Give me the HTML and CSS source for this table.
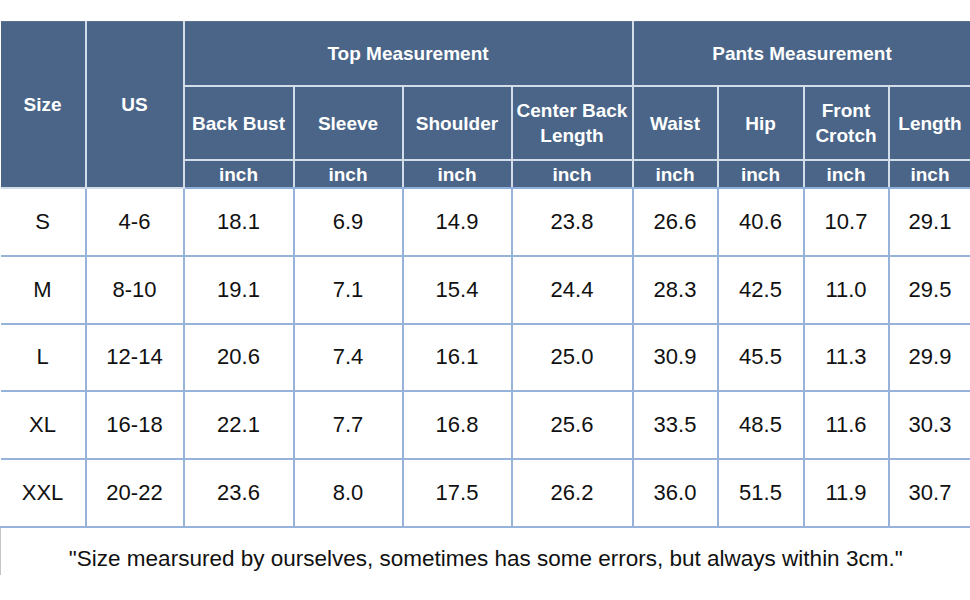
FILE: index.html
```html
<!DOCTYPE html>
<html>
<head>
<meta charset="utf-8">
<link rel="stylesheet" href="styles.css">
</head>
<body>
<table class="chart">
  <colgroup>
    <col style="width:85px"><col style="width:98px"><col style="width:110px"><col style="width:109px"><col style="width:109px"><col style="width:121px"><col style="width:85px"><col style="width:86px"><col style="width:85px"><col style="width:82px">
  </colgroup>
  <thead>
    <tr class="h1">
      <th rowspan="3" class="first">Size</th>
      <th rowspan="3">US</th>
      <th colspan="4">Top Measurement</th>
      <th colspan="4" class="last">Pants Measurement</th>
    </tr>
    <tr class="h2">
      <th>Back Bust</th>
      <th>Sleeve</th>
      <th>Shoulder</th>
      <th>Center Back<br>Length</th>
      <th>Waist</th>
      <th>Hip</th>
      <th>Front<br>Crotch</th>
      <th class="last">Length</th>
    </tr>
    <tr class="h3">
      <th>inch</th><th>inch</th><th>inch</th><th>inch</th><th>inch</th><th>inch</th><th>inch</th><th class="last">inch</th>
    </tr>
  </thead>
  <tbody>
    <tr><td class="first">S</td><td>4-6</td><td>18.1</td><td>6.9</td><td>14.9</td><td>23.8</td><td>26.6</td><td>40.6</td><td>10.7</td><td class="last">29.1</td></tr>
    <tr><td class="first">M</td><td>8-10</td><td>19.1</td><td>7.1</td><td>15.4</td><td>24.4</td><td>28.3</td><td>42.5</td><td>11.0</td><td class="last">29.5</td></tr>
    <tr><td class="first">L</td><td>12-14</td><td>20.6</td><td>7.4</td><td>16.1</td><td>25.0</td><td>30.9</td><td>45.5</td><td>11.3</td><td class="last">29.9</td></tr>
    <tr><td class="first">XL</td><td>16-18</td><td>22.1</td><td>7.7</td><td>16.8</td><td>25.6</td><td>33.5</td><td>48.5</td><td>11.6</td><td class="last">30.3</td></tr>
    <tr><td class="first">XXL</td><td>20-22</td><td>23.6</td><td>8.0</td><td>17.5</td><td>26.2</td><td>36.0</td><td>51.5</td><td>11.9</td><td class="last">30.7</td></tr>
    <tr class="note"><td colspan="10">"Size mearsured by ourselves, sometimes has some errors, but always within 3cm."</td></tr>
  </tbody>
</table>
</body>
</html>
```

FILE: styles.css
```css
html, body {
  margin: 0;
  padding: 0;
  background: #ffffff;
}
body {
  padding-top: 21px;
  font-family: "Liberation Sans", Arial, sans-serif;
}
.chart {
  width: 970px;
  table-layout: fixed;
  border-collapse: collapse;
  border-spacing: 0;
}
.chart th {
  background: #4a6587;
  color: #ffffff;
  font-weight: bold;
  font-size: 19px;
  line-height: 25px;
  text-align: center;
  vertical-align: middle;
  padding: 0;
  border: 2px solid #d3dde9;
  border-top-color: #5d7292;
}
.chart th.first { border-left: none; }
.chart th.last { border-right: none; }
.chart .h1 th { height: 63px; border-top: 1px solid #5d7292; }
.chart .h2 th { height: 72px; }
.chart .h3 th { height: 24px; line-height: 22px; padding-top: 2px; border-bottom: 2px solid #8fb0dc; }
.chart td {
  font-size: 22px;
  color: #111111;
  text-align: center;
  vertical-align: middle;
  height: 65.8px;
  padding: 0;
  border: 2px solid #98b3da;
}
.chart td.first { border-left: none; }
.chart td.last { border-right: none; }
.chart .note td {
  height: 48px;
  padding-top: 16px;
  padding-bottom: 0;
  line-height: 26px;
  box-sizing: border-box;
  border: none;
  border-left: 1px solid #c4c4c4;
  border-top: 2px solid #98b3da;
  font-size: 22.5px;
}
```
